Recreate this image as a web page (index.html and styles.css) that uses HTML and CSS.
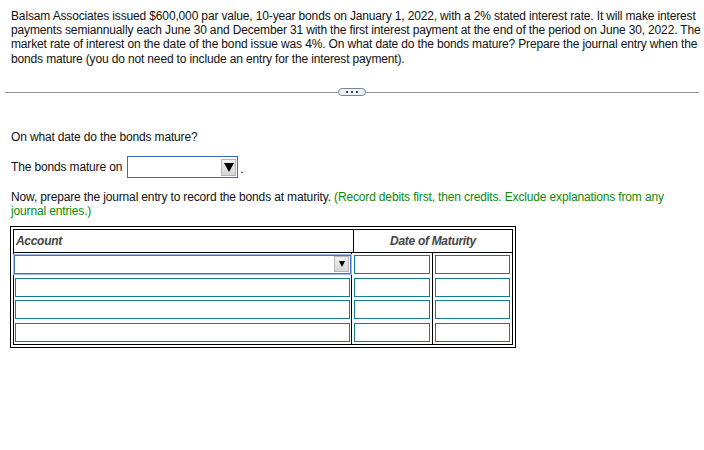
FILE: index.html
```html
<!DOCTYPE html>
<html>
<head>
<meta charset="utf-8">
<link rel="stylesheet" href="styles.css">
</head>
<body>
<div class="page">
  <p class="question">Balsam Associates issued $600,000 par value, 10-year bonds on January 1, 2022, with a 2% stated interest rate. It will make interest payments semiannually each June 30 and December 31 with the first interest payment at the end of the period on June 30, 2022. The market rate of interest on the date of the bond issue was 4%. On what date do the bonds mature? Prepare the journal entry when the bonds mature (you do not need to include an entry for the interest payment).</p>

  <div class="divider"><span class="pill"><span class="dot"></span><span class="dot"></span><span class="dot"></span></span></div>

  <p class="q2">On what date do the bonds mature?</p>

  <div class="answer-line">
    <span>The bonds mature on</span>
    <span class="select date-select"><span class="arrow big"></span></span>
    <span class="period">.</span>
  </div>

  <p class="instr">Now, prepare the journal entry to record the bonds at maturity. <span class="green">(Record debits first, then credits. Exclude explanations from any</span> <span class="green">journal entries.)</span></p>

  <div class="journal">
    <div class="journal-inner">
      <div class="head">
        <div class="h-account">Account</div>
        <div class="h-date">Date of Maturity</div>
      </div>
      <div class="body">
        <div class="col col-account">
          <span class="select acct-select"><span class="arrow small"></span></span>
          <span class="field"></span>
          <span class="field"></span>
          <span class="field"></span>
        </div>
        <div class="col col-date">
          <span class="field"></span>
          <span class="field"></span>
          <span class="field"></span>
          <span class="field"></span>
        </div>
        <div class="col col-date last">
          <span class="field"></span>
          <span class="field"></span>
          <span class="field"></span>
          <span class="field"></span>
        </div>
      </div>
    </div>
  </div>
</div>
</body>
</html>
```

FILE: styles.css
```css
html, body {
  margin: 0;
  padding: 0;
  background: #fff;
}

body {
  font-family: "Liberation Sans", Arial, sans-serif;
  font-size: 12px;
  letter-spacing: -0.15px;
  color: #111;
  line-height: 14.4px;
}

.page {
  padding-top: 8.5px;
  width: 704px;
}

p {
  margin: 0;
}

.question {
  padding-left: 11px;
  width: 692px;
}

.divider {
  display: flex;
  align-items: center;
  margin: 22px 5px 0 5px;
  height: 8px;
}

.divider::before,
.divider::after {
  content: "";
  flex: 1;
  height: 1px;
  background: #8c95a3;
}

.pill {
  width: 26px;
  height: 6px;
  border: 1px solid #7d8794;
  border-radius: 4px;
  background: #eef2f6;
  display: flex;
  align-items: center;
  justify-content: center;
  gap: 3px;
}

.dot {
  width: 2px;
  height: 2px;
  background: #3a4552;
}

.q2 {
  margin-top: 33.5px;
  padding-left: 11px;
}

.answer-line {
  margin-top: 12px;
  padding-left: 11px;
  display: flex;
  align-items: center;
  height: 22px;
}

.select {
  display: flex;
  justify-content: flex-end;
  align-items: center;
  box-sizing: border-box;
  background: #fff;
}

.date-select {
  width: 111px;
  height: 22px;
  margin-left: 5px;
  border: 1px solid #3f67c2;
  padding: 2px 1px 2px 0;
}

.period {
  margin-left: 2px;
  align-self: flex-end;
  line-height: 18px;
}

.arrow {
  display: flex;
  align-items: center;
  justify-content: center;
  box-sizing: border-box;
  background: linear-gradient(#f2f2f2, #d6d6d6);
  border: 1px solid #b5b5b5;
}

.arrow::after {
  content: "";
  width: 0;
  height: 0;
  border-style: solid;
  border-color: #000 transparent transparent transparent;
}

.arrow.big {
  width: 15px;
  height: 17px;
}

.arrow.big::after {
  border-width: 9px 5px 0 5px;
}

.arrow.small {
  width: 15px;
  height: 16px;
}

.arrow.small::after {
  border-width: 6px 3.5px 0 3.5px;
}

.instr {
  margin-top: 12px;
  padding-left: 11px;
  width: 666px;
}

.green {
  color: #0a8a0a;
}

.journal {
  margin: 7px 0 0 10px;
  width: 506px;
  box-sizing: border-box;
  border: 1px solid #000;
  padding: 2px;
}

.journal-inner {
  border: 1px solid #000;
}

.head {
  display: flex;
  height: 22px;
  border-bottom: 1px solid #000;
  font-weight: bold;
  font-style: italic;
  color: #444;
  letter-spacing: -0.3px;
}

.h-account {
  width: 337px;
  border-right: 1px solid #000;
  padding-left: 2px;
  display: flex;
  align-items: center;
  padding-top: 1px;
}

.h-date {
  flex: 1;
  display: flex;
  align-items: center;
  justify-content: center;
  padding-top: 1px;
}

.body {
  display: flex;
  height: 91px;
}

.col {
  display: grid;
  grid-auto-rows: 19px;
  row-gap: 3.7px;
  padding-top: 2px;
  box-sizing: border-box;
}

.col-account {
  width: 338px;
  border-right: 1px solid #000;
  padding-left: 1px;
  padding-right: 1px;
}

.col-date {
  width: 81px;
  border-right: 1px solid #000;
  padding-left: 2px;
  padding-right: 2px;
}

.col-date.last {
  width: 78px;
  border-right: none;
  padding-right: 1px;
}

.field {
  display: block;
  box-sizing: border-box;
  border: 1px solid #16798e;
  background: #fff;
}

.acct-select {
  border: 1px solid #4a6fcb;
  box-shadow: 0 0 0 1px #9fb7ec;
  padding: 1px 1px 1px 0;
  margin: 0 -1px 0 -1px;
}
```
